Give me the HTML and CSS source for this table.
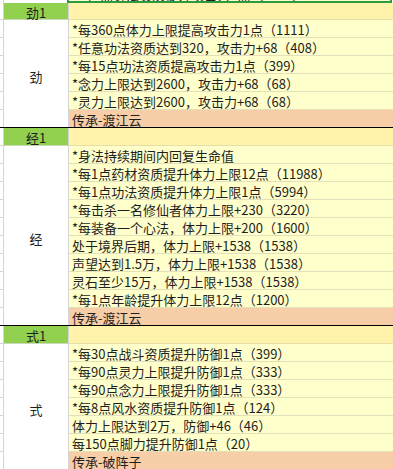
FILE: index.html
```html
<!DOCTYPE html>
<html lang="zh-CN">
<head>
<meta charset="utf-8">
<title>sheet</title>
<link rel="stylesheet" href="styles.css">
</head>
<body>
<div class="sheet">
  <div class="top">
    <div class="stub-cell top-stub"></div>
    <div class="top-a"></div>
    <div class="top-b"><span class="cut">*每1点身法资质提升攻击力1点（1111）</span></div>
  </div>

  <section class="sec">
    <div class="col-stub">
      <div class="sc first-h"></div><div class="sc"></div><div class="sc"></div><div class="sc"></div><div class="sc"></div><div class="sc"></div><div class="sc last"></div>
    </div>
    <div class="col-a">
      <div class="ha first-h">劲1</div>
      <div class="merged">劲</div>
    </div>
    <div class="col-b">
      <div class="hb first-h"></div>
      <div class="r">*每360点体力上限提高攻击力1点（1111）</div>
      <div class="r">*任意功法资质达到320，攻击力+68（408）</div>
      <div class="r">*每15点功法资质提高攻击力1点（399）</div>
      <div class="r">*念力上限达到2600，攻击力+68（68）</div>
      <div class="r">*灵力上限达到2600，攻击力+68（68）</div>
      <div class="r inherit last">传承-渡江云</div>
    </div>
  </section>

  <section class="sec">
    <div class="col-stub">
      <div class="sc"></div><div class="sc"></div><div class="sc"></div><div class="sc"></div><div class="sc"></div><div class="sc"></div><div class="sc"></div><div class="sc"></div><div class="sc"></div><div class="sc"></div><div class="sc last"></div>
    </div>
    <div class="col-a">
      <div class="ha">经1</div>
      <div class="merged">经</div>
    </div>
    <div class="col-b">
      <div class="hb"></div>
      <div class="r">*身法持续期间内回复生命值</div>
      <div class="r">*每1点药材资质提升体力上限12点（11988）</div>
      <div class="r">*每1点功法资质提升体力上限1点（5994）</div>
      <div class="r">*每击杀一名修仙者体力上限+230（3220）</div>
      <div class="r">*每装备一个心法，体力上限+200（1600）</div>
      <div class="r">处于境界后期，体力上限+1538（1538）</div>
      <div class="r">声望达到1.5万，体力上限+1538（1538）</div>
      <div class="r">灵石至少15万，体力上限+1538（1538）</div>
      <div class="r">*每1点年龄提升体力上限12点（1200）</div>
      <div class="r inherit last">传承-渡江云</div>
    </div>
  </section>

  <section class="sec end">
    <div class="col-stub">
      <div class="sc"></div><div class="sc"></div><div class="sc"></div><div class="sc"></div><div class="sc"></div><div class="sc"></div><div class="sc"></div><div class="sc"></div>
    </div>
    <div class="col-a">
      <div class="ha">式1</div>
      <div class="merged">式</div>
    </div>
    <div class="col-b">
      <div class="hb"></div>
      <div class="r">*每30点战斗资质提升防御1点（399）</div>
      <div class="r">*每90点灵力上限提升防御1点（333）</div>
      <div class="r">*每90点念力上限提升防御1点（333）</div>
      <div class="r">*每8点风水资质提升防御1点（124）</div>
      <div class="r">体力上限达到2万，防御+46（46）</div>
      <div class="r">每150点脚力提升防御1点（20）</div>
      <div class="r inherit">传承-破阵子</div>
    </div>
  </section>
</div>
</body>
</html>
```

FILE: styles.css
```css
html, body {
  margin: 0;
  padding: 0;
  background: #ffffff;
}

.sheet {
  width: 393px;
  height: 469px;
  overflow: hidden;
  font-family: "Noto Sans CJK SC", "Microsoft YaHei", sans-serif;
  font-size: 13px;
  color: #1e1e1e;
}

/* top clipped row with green selection edge */
.top {
  display: grid;
  grid-template-columns: 4px 65px 1fr;
  height: 3px;
  overflow: hidden;
}
.top-stub {
  height: 3px;
  border-right: 1px solid #d4d4d4;
  box-sizing: border-box;
}
.top-a {
  border-right: 1px solid #d4d4d4;
}
.top-b {
  margin-left: -2px;
  margin-right: 1px;
  border: 2px solid #2f9a3c;
  border-top: 0;
  background: #fffdd0;
  overflow: hidden;
  padding-left: 5px;
}
.cut {
  display: block;
  line-height: 12px;
  margin-top: -11px;
  white-space: nowrap;
}

.sec {
  display: grid;
  grid-template-columns: 4px 65px 1fr;
  border-bottom: 1px solid #000000;
}
.sec.end {
  border-bottom: 0;
}

.col-stub {
  display: flex;
  flex-direction: column;
  border-right: 1px solid #d4d4d4;
}
.sc {
  height: 18px;
  box-sizing: border-box;
  border-bottom: 1px solid #d4d4d4;
  flex: none;
}

.col-a {
  display: flex;
  flex-direction: column;
  border-right: 1px solid #d4d4d4;
}
.ha {
  height: 18px;
  box-sizing: border-box;
  background: #92d050;
  border-bottom: 1px solid #c8d8b8;
  text-align: center;
  line-height: 15px;
  padding-top: 2px;
  flex: none;
}
.merged {
  flex: 1;
  display: flex;
  align-items: center;
  justify-content: center;
  padding-top: 5px;
  box-sizing: border-box;
  background: #ffffff;
}

.col-b {
  display: flex;
  flex-direction: column;
}
.hb {
  height: 18px;
  box-sizing: border-box;
  background: #fff2aa;
  border-bottom: 1px solid #e6dfa6;
  flex: none;
}
.r {
  height: 18px;
  box-sizing: border-box;
  background: #ffffcc;
  border-bottom: 1px solid #e3e0bc;
  line-height: 14px;
  padding: 3px 0 0 3px;
  white-space: nowrap;
  flex: none;
}
.r.inherit {
  background: #f8cea8;
  border-bottom-color: #e8bf98;
}

.first-h {
  height: 17px;
}
.last {
  height: 17px;
  border-bottom: 0;
}
```
